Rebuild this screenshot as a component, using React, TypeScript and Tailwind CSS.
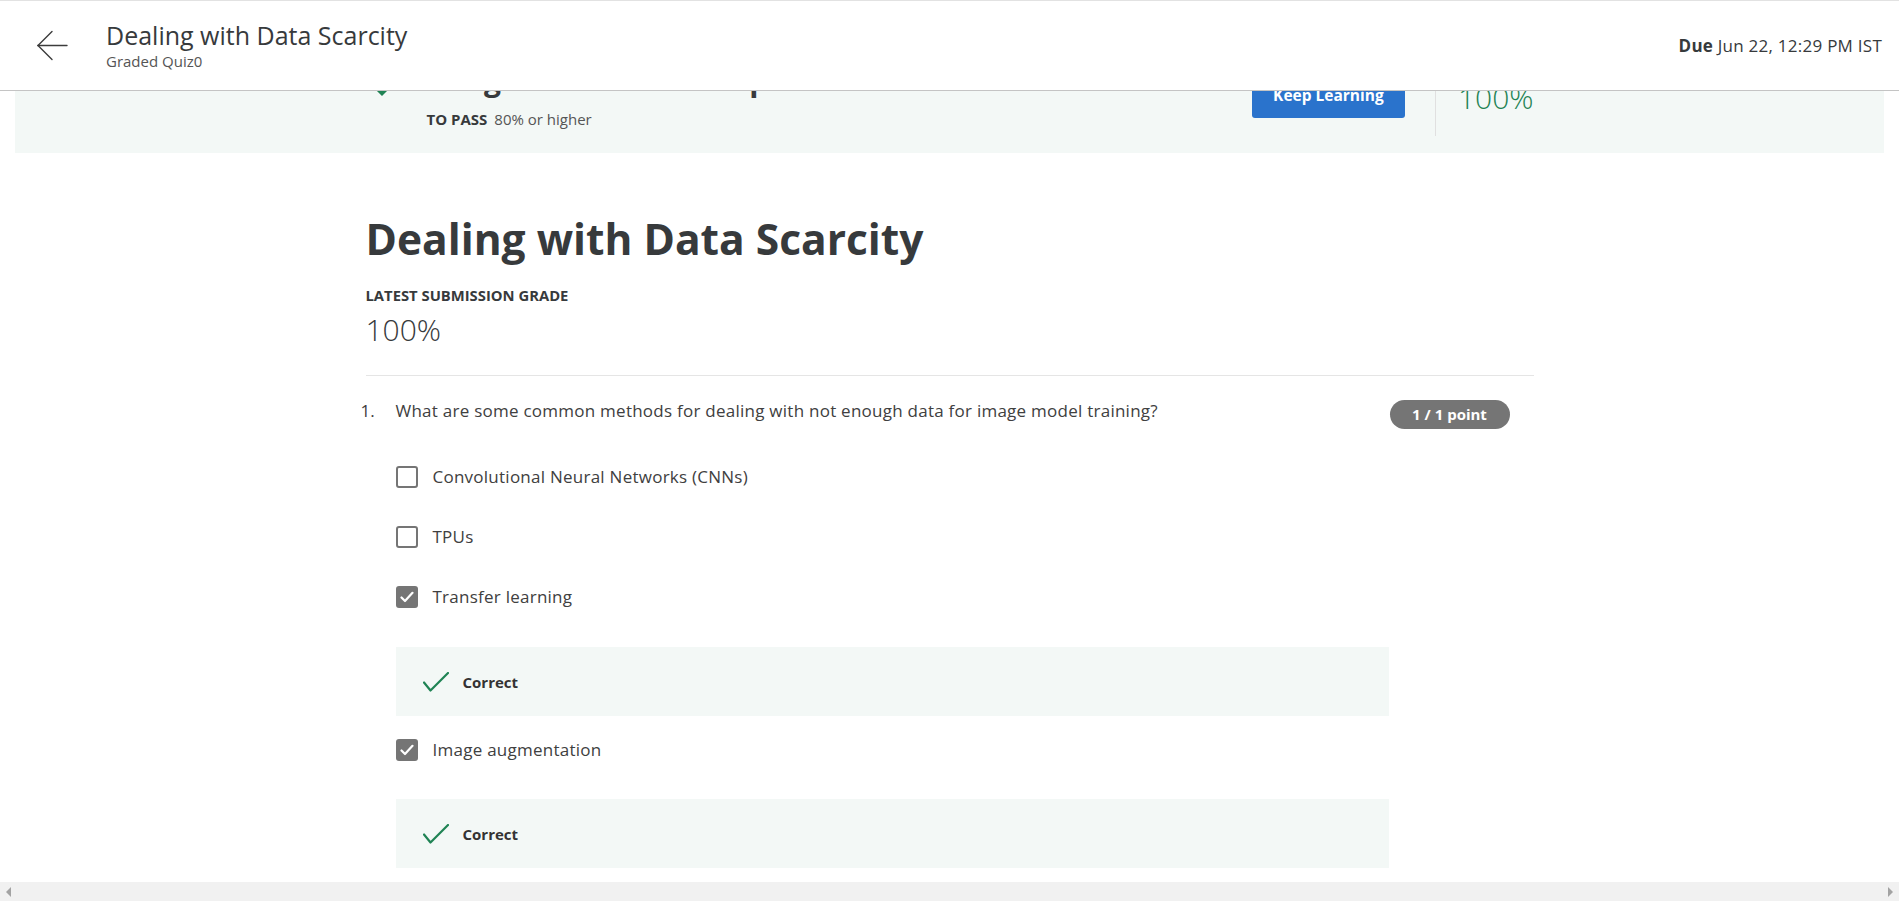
import React from "react";

function BackArrow() {
  return (
    <svg width="31" height="31" viewBox="0 0 31 31" fill="none" stroke="#3c3c3c" strokeWidth="1.4" strokeLinecap="round">
      <line x1="1" y1="15.5" x2="30" y2="15.5" />
      <line x1="1" y1="15.5" x2="15" y2="1.5" />
      <line x1="1" y1="15.5" x2="15" y2="29.5" />
    </svg>
  );
}

function Checkbox({ checked }: { checked: boolean }) {
  if (checked) {
    return (
      <div className="w-[22px] h-[22px] rounded-[3px] bg-[#757575] flex items-center justify-center shrink-0">
        <svg width="14" height="12" viewBox="0 0 14 12" fill="none" stroke="#ffffff" strokeWidth="2.2" strokeLinecap="round" strokeLinejoin="round">
          <polyline points="1.5,6.5 5,10 12.5,1.8" />
        </svg>
      </div>
    );
  }
  return <div className="w-[22px] h-[22px] rounded-[3px] border-2 border-[#757575] bg-white shrink-0" />;
}

function Option({ label, checked, className }: { label: string; checked: boolean; className: string }) {
  return (
    <div className={`flex items-center h-[24px] gap-[15px] ${className}`}>
      <Checkbox checked={checked} />
      <span className="text-[17px] tracking-[0.25px] leading-[24px] text-[#404040]">{label}</span>
    </div>
  );
}

function CorrectBox({ className }: { className: string }) {
  return (
    <div className={`w-[993px] h-[69px] bg-[#f3f8f6] flex items-center pl-[27px] gap-[14px] ${className}`}>
      <svg width="26" height="20" viewBox="0 0 26 20" fill="none" stroke="#1f8354" strokeWidth="2.2" strokeLinecap="round" strokeLinejoin="round">
        <polyline points="1,10.5 7.5,18.5 25,1" />
      </svg>
      <span className="text-[15px] font-bold text-[#333333] leading-[20px]">Correct</span>
    </div>
  );
}

export default function App() {
  return (
    <div className="w-full h-[901px] overflow-hidden flex flex-col bg-white font-['Open_Sans',sans-serif]">
      <div className="relative flex-1 overflow-hidden">
        {/* Fixed header over scrolled content */}
        <header className="absolute top-0 left-0 right-0 z-10 h-[91px] bg-white border-t border-b border-t-[#e2e2e2] border-b-[#c4c4c4] flex items-center pl-[37px] pr-[17px]">
          <BackArrow />
          <div className="ml-[38px] flex flex-col -mt-[1px]">
            <span className="text-[25px] leading-[32px] text-[#373a3c]">Dealing with Data Scarcity</span>
            <span className="text-[15px] leading-[20px] text-[#555555]">Graded Quiz0</span>
          </div>
          <div className="ml-auto text-[17px] tracking-[0.25px] text-[#373a3c]">
            <span className="font-bold">Due</span> Jun 22, 12:29 PM IST
          </div>
        </header>

        {/* Pass banner (scrolled partially under header) */}
        <div className="mt-[37px] mx-[15px] h-[116px] bg-[#f3f8f6]">
          <div className="w-[1168px] mx-auto h-full flex items-start">
            <svg className="ml-[3px] mt-[34px] shrink-0" width="32" height="28" viewBox="0 0 32 28" fill="#1f8354">
              <path d="M2 14 L8 8 L13 13 L24 2 L30 8 L13 25 Z" />
            </svg>
            <div className="ml-[26px] mt-[25px] flex flex-col">
              <span className="text-[30px] leading-[36px] font-bold text-[#373a3c]">Congratulations! You passed!</span>
              <div className="mt-[11px] text-[15px] leading-[20px] text-[#555555]">
                <span className="font-bold text-[#373a3c]">TO PASS</span>
                <span className="ml-[7px]">80% or higher</span>
              </div>
            </div>
            <button className="ml-auto mt-[37px] w-[153px] h-[44px] rounded-[3px] bg-[#2a73cc] text-white text-[15.5px] font-bold">
              Keep Learning
            </button>
            <div className="ml-[30px] mt-[20px] w-px h-[79px] bg-[#e0e0e0]" />
            <div className="ml-[22px] mt-[22px] flex flex-col">
              <span className="text-[15px] leading-[20px] font-bold text-[#373a3c]">GRADE</span>
              <span className="text-[30px] leading-[38px] font-light text-[#1f8354]">100%</span>
            </div>
          </div>
        </div>

        {/* Main content */}
        <main className="w-[1168px] mx-auto">
          <h1 className="mt-[60px] text-[42.5px] leading-[52px] font-bold text-[#373a3c]">Dealing with Data Scarcity</h1>
          <div className="mt-[20px] text-[14.8px] leading-[20px] font-bold text-[#373a3c]">LATEST SUBMISSION GRADE</div>
          <div className="mt-[6px] text-[30px] leading-[38px] font-light text-[#373a3c]">100%</div>
          <div className="mt-[26px] h-px bg-[#e5e5e5]" />

          <div className="mt-[23px] flex items-start">
            <span className="-ml-[5px] w-[35px] text-[17px] leading-[24px] text-[#404040]">1.</span>
            <span className="text-[17px] tracking-[0.25px] leading-[24px] text-[#404040]">
              What are some common methods for dealing with not enough data for image model training?
            </span>
            <span className="ml-auto mr-[24px] mt-[1px] w-[120px] h-[29px] rounded-full bg-[#757575] text-white text-[15px] font-bold flex items-center justify-center">
              1 / 1 point
            </span>
          </div>

          <div className="pl-[30px] flex flex-col">
            <Option className="mt-[36px]" label="Convolutional Neural Networks (CNNs)" checked={false} />
            <Option className="mt-[36px]" label="TPUs" checked={false} />
            <Option className="mt-[36px]" label="Transfer learning" checked={true} />
            <CorrectBox className="mt-[38px]" />
            <Option className="mt-[22px]" label="Image augmentation" checked={true} />
            <CorrectBox className="mt-[37px]" />
          </div>
        </main>
      </div>

      {/* Horizontal scrollbar */}
      <div className="h-[19px] bg-[#f1f1f1] flex items-center justify-between px-[6px] shrink-0">
        <svg width="6" height="10" viewBox="0 0 6 10" fill="#a3a3a3">
          <path d="M5 0 L0 5 L5 10 Z" />
        </svg>
        <svg width="6" height="10" viewBox="0 0 6 10" fill="#a3a3a3">
          <path d="M1 0 L6 5 L1 10 Z" />
        </svg>
      </div>
    </div>
  );
}
